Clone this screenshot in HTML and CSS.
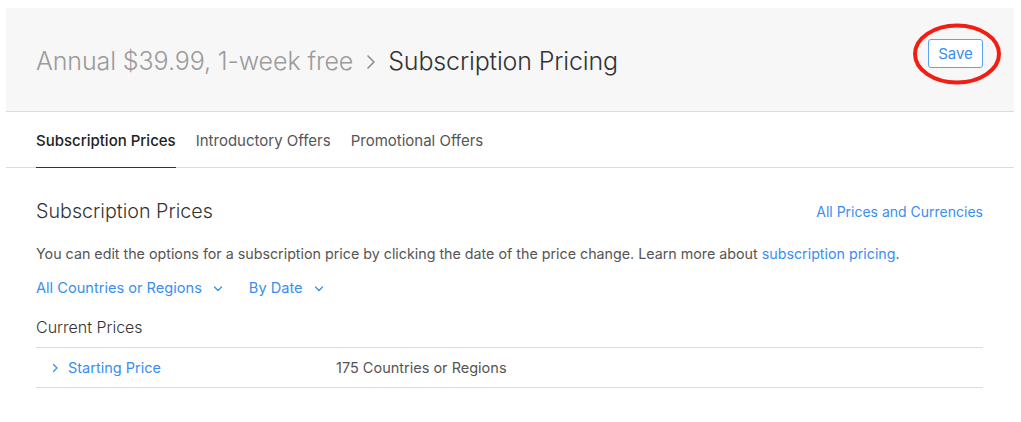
FILE: index.html
```html
<!DOCTYPE html>
<html>
<head>
<meta charset="utf-8">
<link rel="stylesheet" href="styles.css">
</head>
<body>
<div class="page">
  <header class="header">
    <h1 class="title"><span class="crumb">Annual $39.99, 1-week free</span><span class="sep">
      <svg width="12" height="18" viewBox="0 0 12 18"><path d="M3 3 L9 9 L3 15" fill="none" stroke="#8e8e8e" stroke-width="1.6" stroke-linecap="round" stroke-linejoin="round"/></svg></span><span class="current">Subscription Pricing</span></h1>
    <div class="save-wrap">
      <button class="save">Save</button>
      <svg class="circle" width="90" height="64" viewBox="0 0 90 64"><ellipse cx="45" cy="32" rx="42" ry="28.5" fill="none" stroke="#f21e14" stroke-width="4"/></svg>
    </div>
  </header>
  <nav class="tabs">
    <a class="tab active">Subscription Prices</a>
    <a class="tab">Introductory Offers</a>
    <a class="tab">Promotional Offers</a>
  </nav>
  <main class="content">
    <div class="section-head">
      <h2 class="section-title">Subscription Prices</h2>
      <a class="link all">All Prices and Currencies</a>
    </div>
    <p class="desc">You can edit the options for a subscription price by clicking the date of the price change. Learn more about <a class="link">subscription pricing</a>.</p>
    <div class="filters">
      <a class="link filter">All Countries or Regions <svg width="10" height="6" viewBox="0 0 10 6"><path d="M1.5 1 L5 4.5 L8.5 1" fill="none" stroke="#3a8ef2" stroke-width="1.3" stroke-linecap="round" stroke-linejoin="round"/></svg></a>
      <a class="link filter">By Date <svg width="10" height="6" viewBox="0 0 10 6"><path d="M1.5 1 L5 4.5 L8.5 1" fill="none" stroke="#3a8ef2" stroke-width="1.3" stroke-linecap="round" stroke-linejoin="round"/></svg></a>
    </div>
    <h3 class="sub-title">Current Prices</h3>
    <div class="table">
      <div class="row">
        <div class="cell name"><svg width="6" height="10" viewBox="0 0 6 10"><path d="M1.5 1.5 L5 5 L1.5 8.5" fill="none" stroke="#3a8ef2" stroke-width="1.3" stroke-linecap="round" stroke-linejoin="round"/></svg><a class="link">Starting Price</a></div>
        <div class="cell count">175 Countries or Regions</div>
      </div>
    </div>
  </main>
</div>
</body>
</html>
```

FILE: styles.css
```css
* { box-sizing: border-box; }
html, body { background: #fff; }
body {
  margin: 8px 7px 0 6px;
  font-family: Inter, "Helvetica Neue", Arial, sans-serif;
  color: #333;
}
.page { width: 1008px; }
.header {
  height: 104px;
  background: #f7f7f7;
  border-bottom: 1px solid #dcdcdc;
  display: flex;
  align-items: flex-start;
  justify-content: space-between;
  padding: 0 31px 0 30px;
}
.title {
  margin: 38px 0 0;
  height: 30px;
  font-size: 25px;
  line-height: 30px;
  font-weight: 300;
  letter-spacing: -0.1px;
  display: flex;
  align-items: center;
}
.crumb { color: #9b9b9b; }
.sep { display: inline-flex; margin: 0 11px 0 12px; padding-top: 2px; }
.current { color: #333; font-weight: 300; letter-spacing: -0.15px; }
.save-wrap { position: relative; display: flex; margin-top: 31px; }
.save {
  width: 55px;
  height: 29px;
  border: 1px solid #5aa2f2;
  border-radius: 3px;
  background: #fff;
  color: #3a8ef2;
  font-family: Inter, Arial, sans-serif;
  font-size: 15px;
  padding: 0;
}
.circle {
  position: absolute;
  left: -16px;
  top: -17px;
  pointer-events: none;
}
.tabs {
  height: 56px;
  border-bottom: 1px solid #dcdcdc;
  display: flex;
  gap: 20px;
  padding: 0 30px;
}
.tab {
  display: flex;
  align-items: center;
  font-size: 15px;
  color: #555;
  padding-top: 1px;
}
.tab.active {
  color: #222;
  font-weight: 500;
  border-bottom: 1px solid #333;
  margin-bottom: -1px;
}
.content { padding: 29px 31px 0 30px; }
.section-head {
  display: flex;
  justify-content: space-between;
  align-items: center;
  height: 28px;
}
.section-title {
  margin: 0;
  font-size: 19.7px;
  font-weight: 300;
  color: #333;
}
.link { color: #3a8ef2; font-size: 14.5px; text-decoration: none; }
.section-head .all { font-size: 14px; }
.desc {
  margin: 19px 0 0;
  font-size: 14.27px;
  color: #555;
  line-height: 20px;
}
.desc .link { font-size: inherit; }
.filters {
  display: flex;
  gap: 26px;
  margin-top: 14px;
  height: 20px;
  align-items: center;
}
.filter { display: inline-flex; align-items: center; gap: 11px; font-size: 14.6px; }
.filter svg { margin-top: 1px; }
.sub-title {
  margin: 19px 0 0;
  font-size: 16px;
  font-weight: 300;
  color: #333;
  line-height: 20px;
}
.table { margin-top: 10px; border-top: 1px solid #dcdcdc; }
.row {
  display: flex;
  height: 40px;
  border-bottom: 1px solid #dcdcdc;
  align-items: center;
}
.cell.name {
  width: 300px;
  display: flex;
  align-items: center;
  padding-left: 16px;
  gap: 10px;
}
.count { font-size: 14.5px; color: #555; }
```
